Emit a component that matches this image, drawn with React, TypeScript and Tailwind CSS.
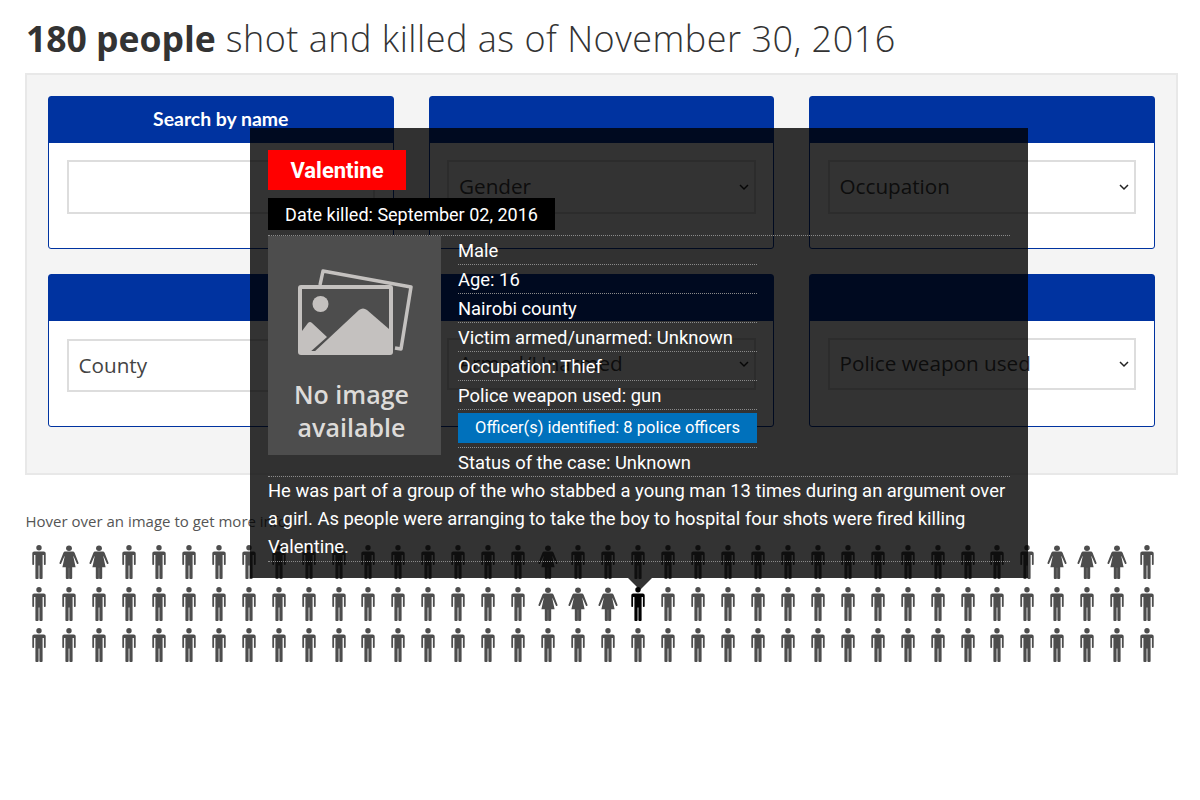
import React from "react";

const Man = ({ color = "#4d4d4d" }: { color?: string }) => (
  <svg width="14" height="34" viewBox="0 0 14 34" fill={color} className="block">
    <circle cx="7" cy="2.800" r="2.700" />
    <path d="M2.300 6.500h9.400c1.200 0 2 .8 2 2V19c0 .6-.4 1-.9 1s-.9-.4-.9-1v-9h-1.300v23c0 .6-.4 1-1 1H8.200c-.5 0-.8-.4-.8-1V20.500H6.600V33c0 .6-.3 1-.8 1H4.400c-.6 0-1-.4-1-1V10H2.100v9c0 .6-.4 1-.9 1s-.9-.4-.9-1V8.500c0-1.200.8-2 2-2z" />
  </svg>
);

const Woman = () => (
  <svg width="20" height="34" viewBox="0 0 20 36" preserveAspectRatio="none" fill="#4d4d4d" className="block">
    <circle cx="10" cy="3.400" r="2.900" />
    <path d="M6.500 7h7c1 0 1.700.5 2.100 1.300l3.900 10.500c.2.600 0 1.100-.5 1.300-.5.200-1 0-1.200-.6L14.600 12l-.3 0 2.300 11.500H13.200V35c0 .6-.3 1-.9 1h-1.500c-.5 0-.7-.4-.7-1V24h-.2v11c0 .6-.2 1-.7 1H7.700c-.6 0-.9-.4-.9-1V23.500H3.400L5.700 12h-.3L2.200 19.500c-.2.600-.7.800-1.200.6-.5-.2-.7-.7-.5-1.300L4.400 8.300C4.800 7.500 5.500 7 6.500 7z" />
  </svg>
);

const womenRow1 = [1, 2, 17, 34, 35, 36];
const womenRow2 = [17, 18, 19];

const PeopleRow = ({ women, black = -1 }: { women: number[]; black?: number }) => (
  <div className="flex h-[41.500px]">
    {Array.from({ length: 38 }).map((_, i) => (
      <div key={i} className="w-[29.960px] flex justify-center">
        {women.includes(i) ? <Woman /> : <Man color={i === black ? "#000000" : "#4d4d4d"} />}
      </div>
    ))}
  </div>
);

const Chevron = () => (
  <svg width="10" height="7" viewBox="0 0 10 7" fill="none" stroke="#222222" strokeWidth="1.500" className="shrink-0">
    <path d="M1 1l4 4 4-4" />
  </svg>
);

const Card = ({
  title,
  field,
  select = false,
  wrap = "pt-[17px]",
  box = "h-[53px]",
}: {
  title?: string;
  field?: string;
  select?: boolean;
  wrap?: string;
  box?: string;
}) => (
  <div className="w-[345.500px] h-[153px] border border-[#0033a0] rounded-[3px] bg-white flex flex-col">
    <div className="h-[46px] bg-[#0033a0] flex items-center justify-center pb-[2px] text-white font-['Lato'] font-bold text-[19.400px]">
      {title}
    </div>
    <div className={`px-[17.500px] ${wrap}`}>
      <div className={`${box} border-2 border-[#dddddd] flex items-center justify-between pl-[10px] pr-[5px] font-['Open_Sans'] text-[20.700px] text-[#444444]`}>
        <span>{field}</span>
        {select && <Chevron />}
      </div>
    </div>
  </div>
);

const Row = ({ children }: { children: React.ReactNode }) => (
  <div className="h-[29px] pt-[1px] border-b border-dotted border-[#8a8a8a] flex items-center">{children}</div>
);

const ImageIcon = () => (
  <svg width="116" height="88" viewBox="0 0 116 88" className="block">
    <path d="M22 16L25 2L113 18L103 80L97 79" fill="none" stroke="#c4c1bf" strokeWidth="3.500" strokeLinejoin="round" />
    <rect x="0" y="16" width="95" height="70" rx="3" fill="#c4c1bf" />
    <rect x="4" y="20" width="87" height="62" fill="#4d4d4d" />
    <circle cx="22.500" cy="35" r="8" fill="#c4c1bf" />
    <path d="M4 62L10 54Q12 52 14 54L29 68L11 84L4 84Z" fill="#c4c1bf" />
    <path d="M15 84L61 41Q65 38 69 41L91 60V84Z" fill="#c4c1bf" />
  </svg>
);

export default function App() {
  return (
    <div className="relative w-[1200px] h-[800px] bg-white overflow-hidden font-['Open_Sans'] text-[#333333]">
      <h1 className="pl-[26px] pt-[14px] h-[73px] font-['Open_Sans'] font-light text-[36px] leading-[48px] tracking-[0.5px] text-[#333333] whitespace-nowrap">
        <span className="font-bold text-[35.500px] tracking-normal">180 people</span> shot and killed as of November 30, 2016
      </h1>
      <div className="ml-[25px] w-[1153px] h-[402px] bg-[#f4f4f4] border-2 border-[#e8e8e8] pl-[21px] pt-[21px]">
        <div className="flex gap-[35px]">
          <Card title="Search by name" box="h-[54px]" />
          <Card field="Gender" select box="h-[54px]" />
          <Card field="Occupation" select box="h-[54px]" />
        </div>
        <div className="flex gap-[35px] mt-[25px]">
          <Card field="County" wrap="pt-[18px]" />
          <Card field="Armed/Unarmed" select box="h-[52px]" />
          <Card field="Police weapon used" select box="h-[52px]" />
        </div>
      </div>
      <p className="pl-[25.500px] mt-[36px] text-[15px] leading-[20px] text-[#555555]">Hover over an image to get more info</p>
      <div className="ml-[24px] mt-[14px]">
        <PeopleRow women={womenRow1} />
        <PeopleRow women={womenRow2} black={20} />
        <PeopleRow women={[]} />
      </div>

      <div className="absolute left-[250px] top-[128px] w-[778px] h-[450px] bg-[rgba(0,0,0,0.8)] px-[18px] pt-[22px] font-['Roboto'] text-[18.400px] text-white">
        <div className="w-[138px] h-[40px] bg-[#ff0000] flex items-center justify-center font-bold text-[22px]">Valentine</div>
        <div className="w-[287px] h-[32px] pt-[1px] mt-[8px] bg-black flex items-center justify-center text-[18px]">Date killed: September 02, 2016</div>
        <div className="w-[742px] mt-[5px] border-b border-dotted border-[#8a8a8a]" />
        <div className="flex">
          <div className="w-[173px] h-[219px] bg-[#4d4d4d] flex flex-col items-center pt-[33px]">
            <div className="ml-[3px]"><ImageIcon /></div>
            <div className="mt-[21px] mr-[6px] font-['Open_Sans'] font-semibold text-[#dddbd9] text-[25px] leading-[33px] text-center">No image<br />available</div>
          </div>
          <div className="w-[299px] ml-[17px]">
            <Row>Male</Row>
            <Row>Age: 16</Row>
            <Row>Nairobi county</Row>
            <Row>Victim armed/unarmed: Unknown</Row>
            <Row>Occupation: Thief</Row>
            <Row>Police weapon used: gun</Row>
            <div className="h-[38px] border-b border-dotted border-[#8a8a8a] pt-[3px]">
              <div className="h-[29.500px] pt-[1px] bg-[#0071bc] flex items-center justify-center text-[16.500px]">Officer(s) identified: 8 police officers</div>
            </div>
            <div className="h-[28px] pt-[1px] flex items-center">Status of the case: Unknown</div>
          </div>
        </div>
        <div className="w-[742px] border-t border-b border-dotted border-[#8a8a8a] leading-[28px]">
          He was part of a group of the who stabbed a young man 13 times during an argument over a girl. As people were arranging to take the boy to hospital four shots were fired killing Valentine.
        </div>
        <div className="absolute left-[378px] top-[450px] w-0 h-0 border-l-[12px] border-r-[12px] border-t-[12px] border-l-transparent border-r-transparent border-t-[rgba(0,0,0,0.8)]" />
      </div>
    </div>
  );
}
